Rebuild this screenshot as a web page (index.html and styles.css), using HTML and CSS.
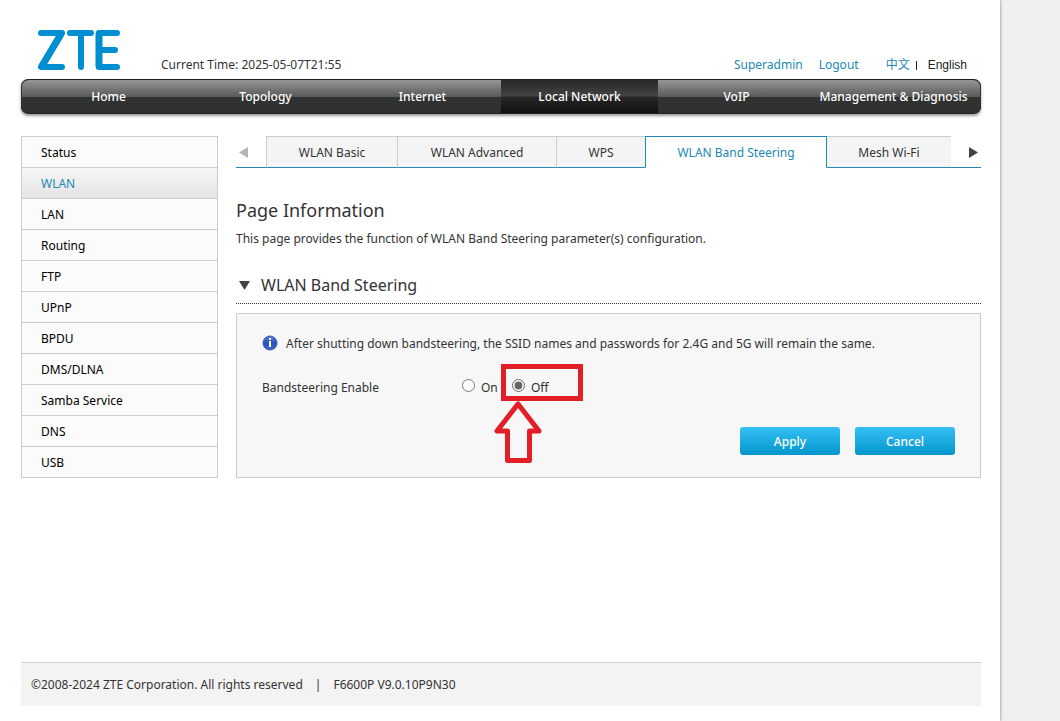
FILE: index.html
```html
<!DOCTYPE html>
<html lang="en">
<head>
<meta charset="utf-8">
<title>F6600P</title>
<link rel="stylesheet" href="styles.css">
</head>
<body>
<div class="page">
  <header class="header">
    <svg class="logo" width="84" height="42" viewBox="0 0 84 42" role="img" aria-label="ZTE" fill="none" stroke="#008ed3" stroke-width="6" stroke-linecap="round" stroke-linejoin="round">
      <path d="M4 4H25L4 38H25"/>
      <path d="M24 5L5 37" stroke-width="7"/>
      <path d="M33 4H54M44 4V38"/>
      <path d="M80 4H62V38H80M62 21H78"/>
      <path d="M62 5V37" stroke-width="7"/>
    </svg>
    <span class="time">Current Time: 2025-05-07T21:55</span>
    <div class="account">
      <a href="#">Superadmin</a>
      <a href="#">Logout</a>
      <div class="lang"><a class="chinese" href="#" lang="zh">中文</a><span class="bar"></span><a class="english" href="#">English</a></div>
    </div>
  </header>
  <nav class="mainnav">
    <a href="#">Home</a>
    <a href="#">Topology</a>
    <a href="#">Internet</a>
    <a class="active" href="#">Local Network</a>
    <a href="#">VoIP</a>
    <a href="#">Management &amp; Diagnosis</a>
  </nav>
  <div class="body">
    <nav class="side">
      <a href="#">Status</a>
      <a class="active" href="#">WLAN</a>
      <a href="#">LAN</a>
      <a href="#">Routing</a>
      <a href="#">FTP</a>
      <a href="#">UPnP</a>
      <a href="#">BPDU</a>
      <a href="#">DMS/DLNA</a>
      <a href="#">Samba Service</a>
      <a href="#">DNS</a>
      <a href="#">USB</a>
    </nav>
    <main class="content">
      <div class="tabbar">
        <button class="scroll" type="button" aria-label="Previous tabs"><svg width="9" height="11" viewBox="0 0 9 11"><path d="M9 0V11L0 5.500Z" fill="#b4b4b4"/></svg></button>
        <nav class="tabs">
          <a href="#">WLAN Basic</a>
          <a href="#">WLAN Advanced</a>
          <a href="#">WPS</a>
          <a class="active" href="#">WLAN Band Steering</a>
          <a href="#">Mesh Wi-Fi</a>
        </nav>
        <button class="scroll" type="button" aria-label="Next tabs"><svg class="next" width="9" height="11" viewBox="0 0 9 11"><path d="M0 0V11L9 5.500Z" fill="#444"/></svg></button>
      </div>
      <h1>Page Information</h1>
      <p class="intro">This page provides the function of WLAN Band Steering parameter(s) configuration.</p>
      <h2><svg width="11" height="9" viewBox="0 0 11 9"><path d="M0 0H11L5.500 9Z" fill="#444"/></svg>WLAN Band Steering</h2>
      <form class="panel">
        <p class="note">
          <svg width="16" height="16" viewBox="0 0 16 16">
            <defs><linearGradient id="info" x2="0" y2="1"><stop stop-color="#5b83dc"/><stop offset=".5" stop-color="#2951bd"/><stop offset="1" stop-color="#4067d0"/></linearGradient></defs>
            <circle cx="8" cy="8" r="7" fill="url(#info)" stroke="#3459ad"/>
            <path d="M7 3H9V5H7ZM7 6H9V12H7Z" fill="#fff"/>
          </svg>
          After shutting down bandsteering, the SSID names and passwords for 2.4G and 5G will remain the same.
        </p>
        <div class="field" role="radiogroup" aria-labelledby="enable">
          <span class="fieldname" id="enable">Bandsteering Enable</span>
          <label class="option"><input type="radio" name="band"><span>On</span></label>
          <label class="option"><input type="radio" name="band" checked><span>Off</span>
            <svg class="mark" width="92" height="100" viewBox="0 0 92 100" fill="none" stroke="#e31e26" aria-hidden="true">
              <path d="M12.500 2.500H89.500V34.500H12.500Z" stroke-width="5" stroke-miterlimit="10"/>
              <path d="M27 40L6 67H16.500V96.500H38.500V67H48Z" stroke-width="5" stroke-linejoin="round"/>
            </svg>
          </label>
        </div>
        <div class="actions"><button type="button">Apply</button><button type="button">Cancel</button></div>
      </form>
    </main>
  </div>
  <footer class="footer"><span>©2008-2024 ZTE Corporation. All rights reserved</span><span>|</span><span>F6600P V9.0.10P9N30</span></footer>
</div>
</body>
</html>
```
FILE: styles.css
```css
* { box-sizing: border-box; }
body {
  margin: 0;
  background: #f0f0f0;
  color: #333;
  font: 12px/18px "Noto Sans", "Noto Sans CJK SC", sans-serif;
}
a { color: #2089b4; text-decoration: none; }
h1, h2, p { margin: 0; }
button { font: inherit; cursor: pointer; }
.page {
  display: flex;
  flex-direction: column;
  min-height: 100vh;
  margin-right: 60px;
  padding: 0 19px 15px 21px;
  background: #fff;
  box-shadow: 0 0 3px #777;
}
.header {
  display: flex;
  align-items: flex-end;
  padding: 29px 14px 5px 16px;
}
.logo { margin-bottom: 3px; }
.time { margin-left: 40px; }
.account {
  display: flex;
  gap: 16px;
  margin-left: auto;
}
.lang {
  display: flex;
  align-items: center;
  margin-left: 11px;
}
.bar {
  width: 1px;
  height: 9px;
  margin: 0 11px 0 6px;
  background: #222;
}
.lang .english { color: #222; font-family: "Liberation Sans", sans-serif; }
.mainnav {
  display: grid;
  grid-template-columns: repeat(6, 1fr);
  padding: 0 9px;
  border: 1px solid #222;
  border-width: 1px 0;
  border-radius: 7px;
  background: linear-gradient(#969696, #5a5a5a 50%, #303232 51%, #303030);
  box-shadow: 0 2px 3px #999, inset 1px 0 #333, inset -1px 0 #333;
}
.mainnav a {
  color: #fff;
  font-weight: 500;
  line-height: 33px;
  text-align: center;
  white-space: nowrap;
}
.mainnav .active { background: linear-gradient(#282828, #434343 48%, #272727 52%, #101010); }
.body {
  display: flex;
  gap: 18px;
  margin-top: 22px;
}
.side {
  flex: 0 0 197px;
  align-self: flex-start;
  border: 1px solid #ccc;
  background: #fbfbfb;
}
.side a {
  display: block;
  padding: 7px 19px 5px;
  color: #000;
}
.side a + a { border-top: 1px solid #ccc; }
.side .active { color: #2089b4; background: linear-gradient(#f6f6f6, #e4e4e4); }
.content { flex: 1; min-width: 0; }
.tabbar {
  display: flex;
  height: 32px;
  background: linear-gradient(#2089b4, #2089b4) bottom / 100% 1px no-repeat;
}
.scroll {
  display: flex;
  align-items: center;
  flex: 0 0 30px;
  padding: 0 3px;
  border: 0;
  background: none;
}
.next { margin-left: auto; }
.tabs {
  display: grid;
  flex: 1;
  grid-template-columns: 131fr 159fr 89fr 182fr 124fr;
}
.tabs a {
  padding-top: 2px;
  border: 1px solid #ccc;
  border-bottom-color: #2089b4;
  border-right: 0;
  background: #f4f4f4;
  color: #333;
  line-height: 28px;
  text-align: center;
  white-space: nowrap;
}
.tabs .active {
  border: 1px solid #2089b4;
  border-bottom-color: #fff;
  background: #fff;
  color: #2089b4;
}
.tabs .active + a { border-left: 0; }
h1, h2 { font-weight: 400; line-height: 24px; }
h1 { margin-top: 30px; font-size: 18px; }
.intro { margin-top: 8px; }
h2 {
  display: flex;
  align-items: center;
  gap: 11px;
  margin-top: 25px;
  padding: 0 3px 6px;
  border-bottom: 1px dotted #333;
  font-size: 16px;
}
.panel {
  margin-top: 9px;
  padding: 21px 25px 22px;
  border: 1px solid #ccc;
  background: #f7f7f7;
}
.note { display: flex; align-items: center; gap: 8px; }
.note svg { margin-bottom: 2px; }
.field { display: flex; align-items: center; margin-top: 26px; }
.fieldname { width: 200px; }
.option {
  position: relative;
  display: flex;
  align-items: center;
  gap: 6px;
  width: 50px;
}
.option input { width: 13px; height: 13px; margin: 0 0 5px; accent-color: #666; }
.mark {
  position: absolute;
  top: -15px;
  left: -21px;
  pointer-events: none;
}
.actions {
  display: flex;
  justify-content: flex-end;
  gap: 15px;
  margin-top: 30px;
}
.actions button {
  width: 100px;
  height: 28px;
  padding: 1px 0 0;
  border: 0;
  border-radius: 3px;
  background: linear-gradient(#35bff5, #0296cb);
  color: #fff;
  font-weight: 500;
}
.footer {
  display: flex;
  gap: 12px;
  margin-top: auto;
  padding: 13px 10px 12px;
  border-top: 1px solid #d0d0d0;
  background: #f3f3f3;
}
```
